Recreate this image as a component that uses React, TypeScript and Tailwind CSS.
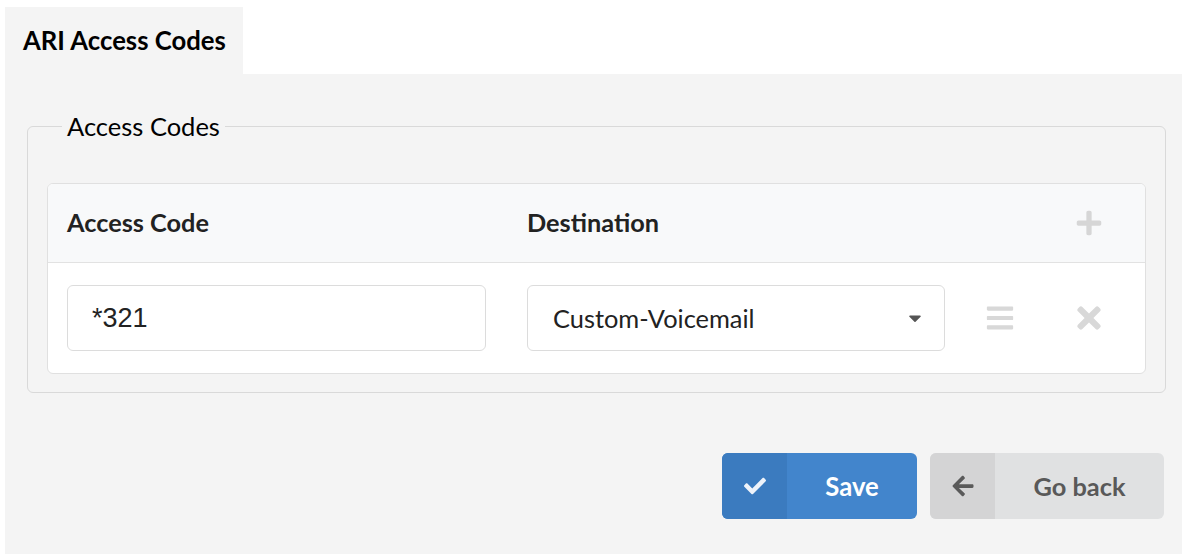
import React from "react";
import { FaCheck, FaArrowLeft, FaPlus, FaBars, FaTimes, FaCaretDown } from "react-icons/fa";

export default function App() {
  return (
    <div className="w-[1182px] h-[560px] bg-white text-[#212121]" style={{ fontFamily: "Lato, 'Noto Sans', sans-serif" }}>
      <div className="pt-[7px] pl-[5px]">
        <div className="w-[238px] h-[67px] bg-[#f4f4f4] flex items-center pl-[18px] text-[25.7px] font-bold text-black">
          ARI Access Codes
        </div>
        <div className="h-[480px] bg-[#f4f4f4] pt-[38px] pl-[22px] pr-[16px]">
          <fieldset className="border border-[#d9d9d9] rounded-[6px] px-[19px] pb-[18px] pt-[43px]">
            <legend className="ml-[15px] px-[5px] text-[25.5px] leading-[28px] text-black">Access Codes</legend>
            <div className="bg-white border border-[#e0e0e0] rounded-[6px] overflow-hidden">
              <div className="h-[79px] bg-[#f8f9fa] border-b border-[#e2e2e2] flex items-center pl-[19px] text-[25.3px] font-bold text-[#222]">
                <div className="w-[460px]">Access Code</div>
                <div className="w-[418px]">Destination</div>
                <div className="w-[129px]" />
                <div className="w-[30px] flex justify-center text-[#d6d6d6]">
                  <FaPlus className="w-[28px] h-[28px]" />
                </div>
              </div>
              <div className="h-[110px] flex items-center pl-[19px]">
                <div className="w-[419px] h-[66px] border border-[#dcdcdc] rounded-[6px] flex items-center pl-[24px] text-[27px] text-[#222]" style={{ fontFamily: "'Liberation Sans', Arial, sans-serif" }}>
                  *321
                </div>
                <div className="w-[41px]" />
                <div className="w-[418px] h-[66px] border border-[#dcdcdc] rounded-[6px] flex items-center justify-between pl-[25px] pr-[22px] text-[25.4px] text-[#222]">
                  <span>Custom-Voicemail</span>
                  <FaCaretDown className="w-[14px] h-[20px] text-[#555]" />
                </div>
                <div className="w-[40px]" />
                <div className="w-[30px] flex justify-center text-[#d8d8d8]">
                  <FaBars className="w-[30px] h-[30px]" />
                </div>
                <div className="w-[59px]" />
                <div className="w-[30px] flex justify-center text-[#d8d8d8]">
                  <FaTimes className="w-[26px] h-[34px]" />
                </div>
              </div>
            </div>
          </fieldset>
          <div className="flex justify-end gap-[13px] mt-[60px] pr-[2px]">
            <button className="w-[195px] h-[66px] rounded-[6px] bg-[#4285cc] flex overflow-hidden text-white text-[25.7px] font-bold">
              <span className="w-[65px] h-full bg-[#3b7bbf] flex items-center justify-center">
                <FaCheck className="w-[22px] h-[22px] text-[#eef3fa]" />
              </span>
              <span className="flex-1 flex items-center justify-center">Save</span>
            </button>
            <button className="w-[234px] h-[66px] rounded-[6px] bg-[#e0e1e2] flex overflow-hidden text-[#595959] text-[25.4px] font-bold">
              <span className="w-[65px] h-full bg-[#d4d4d5] flex items-center justify-center">
                <FaArrowLeft className="w-[24px] h-[24px] text-[#5a5a5a]" />
              </span>
              <span className="flex-1 flex items-center justify-center">Go back</span>
            </button>
          </div>
        </div>
      </div>
    </div>
  );
}
